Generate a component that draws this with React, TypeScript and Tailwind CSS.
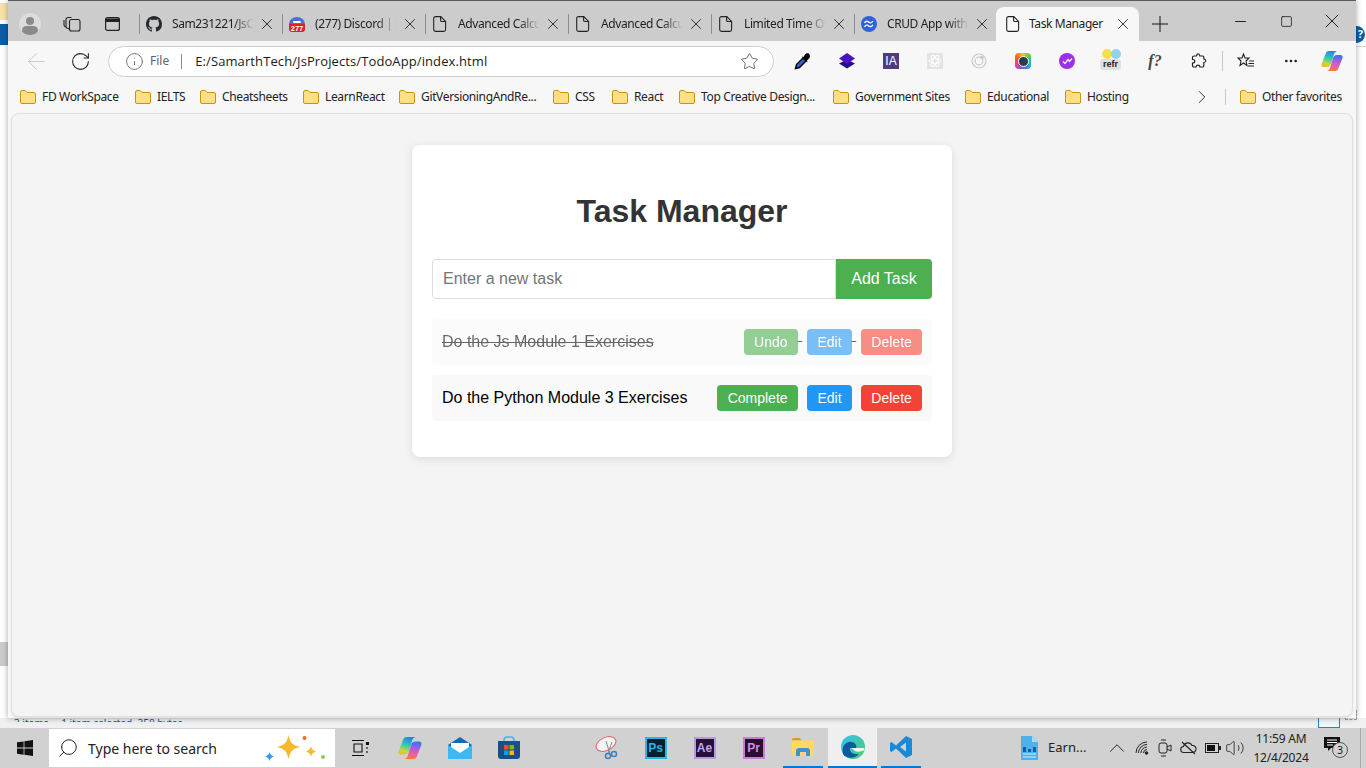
import { ReactNode } from "react";
import { ArrowLeft, ChevronRight, ChevronUp, Ellipsis, Info, Minus, Plus, RotateCw, Search, Square, Star, Volume2, X } from "lucide-react";

const FONT = "font-['Noto_Sans','Open_Sans',sans-serif]";

const bookmarks = [
    { label: "FD WorkSpace", box: "w-[115px]" },
    { label: "IELTS", box: "w-[65px]" },
    { label: "Cheatsheets", box: "w-[103px]" },
    { label: "LearnReact", box: "w-[96px]" },
    { label: "GitVersioningAndRe...", box: "w-[154px]" },
    { label: "CSS", box: "w-[59px]" },
    { label: "React", box: "w-[67px]" },
    { label: "Top Creative Design...", box: "w-[154px]" },
    { label: "Government Sites", box: "w-[132px]" },
    { label: "Educational", box: "w-[100px]" },
    { label: "Hosting", box: "w-[126px]" },
];

function Folder() {
    return (
        <svg width="16" height="14" viewBox="0 0 16 14" className="shrink-0">
            <path d="M.5 3V2A1.5 1.5 0 0 1 2 .5h3.2L7 2.5h7A1.5 1.5 0 0 1 15.5 4v8a1.5 1.5 0 0 1-1.5 1.5H2A1.5 1.5 0 0 1 .5 12Z" fill="#ffdf85" stroke="#c8930f" />
        </svg>
    );
}

function PageIcon() {
    return (
        <svg width="14" height="16" viewBox="0 0 14 16" fill="none" stroke="#222" strokeWidth="1.1" className="shrink-0">
            <path d="M2.5.6h5.3L12.6 5.4V13.6a1.8 1.8 0 0 1-1.8 1.8H2.5A1.8 1.8 0 0 1 .7 13.6V2.4A1.8 1.8 0 0 1 2.5.6Z" />
            <path d="M7.6.8v3.4a1.3 1.3 0 0 0 1.3 1.3h3.5" />
        </svg>
    );
}

function GithubIcon() {
    return (
        <svg width="16" height="16" viewBox="0 0 16 16" fill="#24292f" className="shrink-0">
            <path d="M8 0C3.58 0 0 3.58 0 8c0 3.54 2.29 6.53 5.47 7.59.4.07.55-.17.55-.38 0-.19-.01-.82-.01-1.49-2.01.37-2.53-.49-2.69-.94-.09-.23-.48-.94-.82-1.13-.28-.15-.68-.52-.01-.53.63-.01 1.08.58 1.23.82.72 1.21 1.87.87 2.33.66.07-.52.28-.87.51-1.07-1.78-.2-3.64-.89-3.64-3.95 0-.87.31-1.59.82-2.15-.08-.2-.36-1.02.08-2.12 0 0 .67-.21 2.2.82.64-.18 1.32-.27 2-.27s1.36.09 2 .27c1.53-1.04 2.2-.82 2.2-.82.44 1.1.16 1.92.08 2.12.51.56.82 1.27.82 2.15 0 3.07-1.87 3.75-3.65 3.95.29.25.54.73.54 1.48 0 1.07-.01 1.93-.01 2.2 0 .21.15.46.55.38A8.01 8.01 0 0 0 16 8c0-4.42-3.58-8-8-8Z" />
        </svg>
    );
}

function DiscordBadge() {
    return (
        <svg width="16" height="16" viewBox="0 0 16 16" className="shrink-0">
            <path d="M0 8a8 7 0 0 1 16 0Z" fill="#4a6ee0" />
            <path d="M0 8h16v5a3 3 0 0 1-3 3H3a3 3 0 0 1-3-3Z" fill="#d8232a" />
            <rect x="4" y="5" width="8" height="2" rx="1" fill="#fff" />
            <text x="8" y="14.500" textAnchor="middle" fontSize="7.500" fontWeight="700" fill="#fff" fontFamily="Liberation Sans, sans-serif">277</text>
        </svg>
    );
}

function TailwindBadge() {
    return (
        <svg width="16" height="16" viewBox="0 0 16 16" className="shrink-0">
            <circle cx="8" cy="8" r="8" fill="#2f62d9" />
            <path d="M3.500 7c1-1.600 2-2 3-1.600 1.200.4 1.700 1.500 3 1.400.8 0 1.600-.5 2.500-1.800M3.500 10.800c1-1.600 2-2 3-1.600 1.200.4 1.700 1.500 3 1.400.8 0 1.600-.5 2.500-1.800" fill="none" stroke="#fff" strokeWidth="1.300" />
        </svg>
    );
}

function Tab({ icon, title }: { icon: ReactNode; title: string }) {
    return (
        <div className="flex h-[34px] w-[143px] items-center pl-[7px]">
            <div className="h-[20px] w-px shrink-0 bg-[#8c8c8c]" />
            <div className="ml-[5px] flex w-[18px] justify-center">{icon}</div>
            <span className="ml-[9px] w-[82px] overflow-hidden whitespace-nowrap text-[12px] tracking-[-0.4px] text-[#222] [mask-image:linear-gradient(to_right,black_75%,transparent)]">{title}</span>
            <X size={18} strokeWidth={1.2} className="ml-auto -mr-px shrink-0 text-[#222]" />
        </div>
    );
}

function ExtensionIcons() {
    return (
        <div className="flex items-center">
            <div className="flex w-[44px] justify-center">
                <svg width="18" height="18" viewBox="0 0 18 18">
                    <path d="M1.500 16.500 2.500 12.500 9 6l3 3-6.500 6.500Z" fill="#2f62d9" stroke="#000" strokeWidth="1.400" />
                    <path d="M7.500 4.500 9.500 5 11 2.500c1.500-2 4-1.500 4.500 0s1 3-1 4.500l-1.500 1.500.5 2Z" fill="#000" />
                </svg>
            </div>
            <div className="flex w-[44px] justify-center">
                <svg width="16" height="16" viewBox="0 0 16 16">
                    <path d="M8 6.500 16 10.500 8 15.500 0 10.500Z" fill="#2b0a8a" />
                    <path d="M8 0 16 5.500 8 11 0 5.500Z" fill="#4a12c4" />
                </svg>
            </div>
            <div className="flex w-[44px] justify-center">
                <div className="flex size-[16px] items-center justify-center bg-[#4e3a85] font-['Liberation_Sans',sans-serif] text-[12px] leading-none text-white">IA</div>
            </div>
            <div className="flex w-[44px] justify-center">
                <div className="flex size-[16px] items-center justify-center bg-[#e4e4e4]">
                    <svg width="14" height="14" viewBox="0 0 14 14" fill="none" stroke="#fff" strokeWidth="1">
                        <ellipse cx="7" cy="7" rx="6" ry="2.400" />
                        <ellipse cx="7" cy="7" rx="6" ry="2.400" transform="rotate(60 7 7)" />
                        <ellipse cx="7" cy="7" rx="6" ry="2.400" transform="rotate(120 7 7)" />
                    </svg>
                </div>
            </div>
            <div className="flex w-[44px] justify-center">
                <svg width="16" height="16" viewBox="0 0 16 16" fill="none" stroke="#c9c9c9" strokeWidth="1.200">
                    <circle cx="8" cy="8" r="7" />
                    <circle cx="8" cy="8" r="3.800" />
                    <circle cx="11" cy="4.500" r="1.200" fill="#c9c9c9" />
                </svg>
            </div>
            <div className="flex w-[44px] justify-center">
                <div className="flex size-[16px] items-center justify-center rounded-[4px] bg-[conic-gradient(#f5c518,#3fcf5f,#12b6d4,#6d5be8,#e83a9a,#f5622a,#f5c518)]">
                    <div className="size-[11px] rounded-full border-[1.5px] border-white bg-[#2d3a4a]" />
                </div>
            </div>
            <div className="flex w-[44px] justify-center">
                <div className="flex size-[16px] items-center justify-center rounded-full bg-[#9b30e8]">
                    <svg width="11" height="8" viewBox="0 0 11 8" fill="none" stroke="#fff" strokeWidth="1.300"><path d="M1 4.500 3 6.500 6 2.500 7.500 4.500 10 1.500" /></svg>
                </div>
            </div>
            <div className="relative flex h-[24px] w-[44px] justify-center">
                <div className="flex">
                    <div className="size-[10px] rounded-full bg-[#f8e04a]" />
                    <div className="-ml-px size-[10px] rounded-full bg-[#8fd3ee]" />
                </div>
                <span className="absolute left-[11px] top-[10px] rounded-[3px] bg-[#e0e0e0] px-[3px] font-['Liberation_Sans',sans-serif] text-[9px] font-bold leading-[11px] text-[#222]">refr</span>
            </div>
            <div className="flex w-[44px] justify-center font-['Liberation_Serif',serif] text-[16px] font-bold italic text-[#444]">f?</div>
            <div className="flex w-[44px] justify-center">
                <svg width="16" height="16" viewBox="0 0 16 16" fill="none" stroke="#222" strokeWidth="1.200">
                    <path d="M6 1.500c1-1 2.500-.5 2.700.8l.1.700h3a1 1 0 0 1 1 1V6c1.500.2 2.200 1.200 1.800 2.400-.3.800-1 1.100-1.800 1.100v3a1.500 1.500 0 0 1-1.500 1.500H9c-.3-1.300-1.100-1.800-2-1.800s-1.700.5-2 1.800H3a1.500 1.500 0 0 1-1.500-1.500V10c1.500 0 2.300-.8 2.300-1.800S3 6.500 1.500 6.500V4.500a1.500 1.500 0 0 1 1.500-1.500h2.500Z" />
                </svg>
            </div>
        </div>
    );
}

function Copilot({ size }: { size: number }) {
    return (
        <svg width={size} height={size} viewBox="0 0 22 22">
            <defs>
                <linearGradient id="cpa" x1="0.6" y1="0" x2="0.3" y2="1">
                    <stop offset="0" stopColor="#1e86e8" />
                    <stop offset="0.45" stopColor="#32c8b0" />
                    <stop offset="0.8" stopColor="#c5d83a" />
                    <stop offset="1" stopColor="#f7b52b" />
                </linearGradient>
                <linearGradient id="cpb" x1="0.6" y1="0" x2="0.4" y2="1">
                    <stop offset="0" stopColor="#2a7cf0" />
                    <stop offset="0.35" stopColor="#a45be8" />
                    <stop offset="0.7" stopColor="#ee5fa5" />
                    <stop offset="1" stopColor="#f8792c" />
                </linearGradient>
            </defs>
            <path d="M8 1h8c-1.500.5-2.500 1.500-3 3l-3 10c-.6 2-2 3-4 3H2.500C.8 17 0 15.500.5 14L4.500 4C5.200 2 6.200 1 8 1Z" fill="url(#cpa)" />
            <path d="M14 21H6c1.500-.5 2.500-1.500 3-3l3-10c.6-2 2-3 4-3h3.500c1.700 0 2.500 1.500 2 3L17.500 18c-.7 2-1.700 3-3.500 3Z" fill="url(#cpb)" />
        </svg>
    );
}

function TaskButton({ color, label }: { color: string; label: string }) {
    return <button className={`ml-[5px] inline-block h-[26px] rounded-[4px] px-[10.2px] font-['Liberation_Sans',sans-serif] text-[14px] text-white ${color}`}>{label}</button>;
}

function TaskRow({ label, done }: { label: string; done?: boolean }) {
    return (
        <li className={`mb-[10px] flex h-[46px] items-center justify-between rounded-[4px] bg-[#f9f9f9] p-[10px] ${done ? "line-through opacity-60" : ""}`}>
            <span className="text-[16px] text-black">{label}</span>
            <div>
                {done ? <TaskButton color="bg-[#4caf50]" label="Undo" /> : <TaskButton color="bg-[#4caf50]" label="Complete" />}{" "}
                <TaskButton color="bg-[#2196f3]" label="Edit" />{" "}
                <TaskButton color="bg-[#f44336]" label="Delete" />
            </div>
        </li>
    );
}

function TaskIcon({ children, box = "w-[49px]" }: { children: ReactNode; box?: string }) {
    return <div className={`flex h-[40px] items-center justify-center ${box}`}>{children}</div>;
}

function AppBadge({ text, border, bg, color }: { text: string; border: string; bg: string; color: string }) {
    return <div className={`flex size-[22px] items-center justify-center border-2 font-['Liberation_Sans',sans-serif] text-[12px] font-bold ${border} ${bg} ${color}`}>{text}</div>;
}

export default function App() {
    return (
        <div className={`relative flex h-[768px] w-[1366px] flex-col overflow-hidden bg-white ${FONT}`}>
            {/* what peeks out from behind the browser window */}
            <div className="absolute left-0 top-[3px] h-[17px] w-[8px] bg-[#f6e3a4]" />
            <div className="absolute left-0 top-[24px] h-[21px] w-[8px] bg-[#0a5ea8]" />
            <div className="absolute left-0 top-[642px] h-[24px] w-[8px] bg-[#cccccc]" />
            <div className="absolute left-0 top-[718px] h-[10px] w-full bg-[#f0f0f0]" />
            <div className="absolute left-[14px] top-[718px] h-[4px] overflow-hidden whitespace-nowrap text-[10px] leading-[10px] text-[#1f4e8c]">3 items &nbsp; &nbsp; 1 item selected &nbsp;358 bytes</div>
            <div className="absolute left-[1348px] top-[26px] flex size-[17px] items-center justify-end rounded-full bg-[#0a5ea8] pr-[2px] text-[11px] font-bold text-white">?</div>
            <div className="absolute left-[1356px] top-[46px] h-px w-[10px] bg-[#d8d8d8]" />
            <div className="absolute left-[1318px] top-[716px] h-[12px] w-[22px] border border-[#2f7fb8] bg-[#eef5fb]" />
            <div className="absolute left-[1345px] top-[710px] h-[10px] w-[12px] border border-dashed border-[#9aa4b5]" />

            <div className="relative z-10 ml-[8px] mr-[10px] flex h-[718px] flex-col bg-[#f7f7f7] shadow-[0_0_6px_rgba(0,0,0,0.35)]">
                <div className="flex h-[41px] shrink-0 items-end border-t border-[#5a5a5a] bg-[#cccccc]">
                    <div className="flex h-[34px] w-[44px] items-center pl-[11px]">
                        <div className="flex size-[22px] flex-col items-center overflow-hidden rounded-full bg-[#dcdcdc] pt-[4px]">
                            <div className="size-[8px] rounded-full bg-[#8a8a8a]" />
                            <div className="mt-px h-[10px] w-[16px] rounded-full bg-[#8a8a8a]" />
                        </div>
                    </div>
                    <div className="flex h-[34px] w-[40px] items-center justify-center">
                        <svg width="18" height="16" viewBox="0 0 18 16" fill="none" stroke="#222" strokeWidth="1.100">
                            <rect x="6.500" y="3.500" width="10.500" height="11.500" rx="2" />
                            <path d="M6.500 13 3.800 12A2 2 0 0 1 3 9.500V3.500A2 2 0 0 1 5 1.500h3.500" />
                            <path d="M3 11 1.500 10A2 2 0 0 1 1 8V4" />
                        </svg>
                    </div>
                    <div className="flex h-[34px] w-[40px] items-center justify-center">
                        <svg width="15" height="14" viewBox="0 0 15 14" fill="none" stroke="#222" strokeWidth="1.200">
                            <rect x=".6" y=".6" width="13.800" height="12.800" rx="2" />
                            <path d="M1 2h13v2.500H1Z" fill="#222" />
                        </svg>
                    </div>
                    <Tab icon={<GithubIcon />} title="Sam231221/JsChallenges" />
                    <Tab icon={<DiscordBadge />} title="(277) Discord | Friends" />
                    <Tab icon={<PageIcon />} title="Advanced Calculator" />
                    <Tab icon={<PageIcon />} title="Advanced Calculator" />
                    <Tab icon={<PageIcon />} title="Limited Time Offer" />
                    <Tab icon={<TailwindBadge />} title="CRUD App with React" />
                    <div className="ml-[6px] flex h-[34px] w-[143px] items-center rounded-t-[8px] bg-[#f7f7f7] pl-[10px] pr-[7px]">
                        <PageIcon />
                        <span className="ml-[9px] whitespace-nowrap text-[12px] tracking-[-0.4px] text-[#222]">Task Manager</span>
                        <X size={18} strokeWidth={1.2} className="ml-auto text-[#222]" />
                    </div>
                    <div className="flex h-[34px] w-[42px] items-center justify-center">
                        <Plus size={26} strokeWidth={0.9} className="text-[#111]" />
                    </div>
                    <div className="ml-[36px] flex h-[34px] items-start pt-[2px]">
                        <div className="flex h-[24px] w-[46px] items-center justify-center"><Minus size={17} strokeWidth={1.3} className="text-[#111]" /></div>
                        <div className="flex h-[24px] w-[46px] items-center justify-center"><Square size={13} strokeWidth={1.4} className="text-[#111]" /></div>
                        <div className="flex h-[24px] w-[46px] items-center justify-center"><X size={24} strokeWidth={0.9} className="text-[#111]" /></div>
                    </div>
                </div>

                <div className="flex h-[40px] shrink-0 items-center">
                    <div className="flex w-[100px] items-center pl-[6px]">
                        <div className="flex w-[44px] justify-center"><ArrowLeft size={27} strokeWidth={0.8} className="text-[#c4c4c4]" /></div>
                        <div className="flex w-[44px] justify-center"><RotateCw size={21} strokeWidth={1.2} className="text-[#222]" /></div>
                    </div>
                    <div className="flex h-[31px] w-[666px] items-center rounded-full border border-[#cfcfcf] bg-white pl-[16px] pr-[14px]">
                        <Info size={19} strokeWidth={1} className="text-[#555]" />
                        <span className="ml-[6px] text-[12px] text-[#5f5f5f]">File</span>
                        <div className="ml-[12px] h-[15px] w-px bg-[#8c8c8c]" />
                        <span className="ml-[13px] mt-[2px] font-['Open_Sans',sans-serif] text-[13px] tracking-[0.1px] text-[#1a1a1a]">E:/SamarthTech/JsProjects/TodoApp/index.html</span>
                        <Star size={19} strokeWidth={0.9} className="ml-auto text-[#333]" />
                    </div>
                    <div className="ml-[7px]"><ExtensionIcons /></div>
                    <div className="ml-px h-[20px] w-px bg-[#c8c8c8]" />
                    <div className="ml-[13px] flex w-[20px] justify-center">
                        <svg width="18" height="17" viewBox="0 0 18 17" fill="none" stroke="#222" strokeWidth="1.100">
                            <path d="M6.500 1 8 5h4L9 8l1 4.500L6.500 10 3 12.500 4 8 1 5h4Z" />
                            <path d="M12 8h5M11.500 10.500H17M11 13h6" />
                        </svg>
                    </div>
                    <Ellipsis size={16} className="ml-[27px] text-[#222]" />
                    <div className="ml-[22px]"><Copilot size={22} /></div>
                </div>

                <div className="flex h-[32px] shrink-0 items-center pl-[12px]">
                    {bookmarks.map((item) => (
                        <div key={item.label} className={`flex shrink-0 items-center gap-[6px] ${item.box}`}>
                            <Folder />
                            <span className="whitespace-nowrap text-[12px] tracking-[-0.35px] text-[#222]">{item.label}</span>
                        </div>
                    ))}
                    <ChevronRight size={22} strokeWidth={1} className="text-[#222]" />
                    <div className="ml-[12px] h-[16px] w-px bg-[#c8c8c8]" />
                    <div className="ml-[14px] flex items-center gap-[6px]">
                        <Folder />
                        <span className="whitespace-nowrap text-[12px] tracking-[-0.35px] text-[#222]">Other favorites</span>
                    </div>
                </div>

                <div className="mx-[3px] mb-px flex-1 rounded-[8px] border border-[#e0e0e0] bg-[#f4f4f4] pt-[31px] font-['Liberation_Sans',sans-serif] shadow-[0_1px_2px_rgba(0,0,0,0.1)]">
                    <div className="mx-auto w-[540px] rounded-[8px] bg-white p-[20px] shadow-[0_2px_10px_rgba(0,0,0,0.1)]">
                        <h1 className="mb-[29px] mt-[28px] text-center text-[32px] font-bold leading-[37px] text-[#333]">Task Manager</h1>
                        <div className="mb-[20px] flex">
                            <input
                                type="text"
                                placeholder="Enter a new task"
                                className="h-[40px] flex-1 rounded-l-[4px] border border-[#ddd] px-[10px] text-[16px] placeholder:text-[#757575]"
                            />
                            <button className="h-[40px] w-[96px] rounded-r-[4px] bg-[#4caf50] text-[16px] text-white">Add Task</button>
                        </div>
                        <ul className="mb-[16px]">
                            <TaskRow label="Do the Js Module 1 Exercises" done />
                            <TaskRow label="Do the Python Module 3 Exercises" />
                        </ul>
                    </div>
                </div>
            </div>

            <div className="relative z-10 mt-[10px] flex h-[40px] shrink-0 items-center bg-[#d1d1d1]">
                <TaskIcon box="w-[49px]">
                    <svg width="16" height="16" viewBox="0 0 16 16" fill="#111"><path d="M0 2.300 6.600 1.400v6.200H0ZM7.400 1.300 16 0v7.600H7.400ZM0 8.400h6.600v6.300L0 13.700ZM7.400 8.400H16V16l-8.600-1.300Z" /></svg>
                </TaskIcon>
                <div className="flex h-[38px] w-[286px] items-center bg-white pl-[8px] pr-[7px]">
                    <Search size={22} strokeWidth={1} className="scale-x-[-1] text-[#111]" />
                    <span className="ml-[9px] text-[14px] text-[#222]">Type here to search</span>
                    <svg width="66" height="34" viewBox="0 0 66 34" className="ml-auto">
                        <path d="M26.500 4c1.500 7.500 4 10.500 11.500 12-7.500 1.500-10 4.500-11.500 12-1.500-7.500-4-10.500-11.500-12 7.500-1.500 10-4.500 11.500-12Z" fill="#f7b92b" />
                        <path d="M49 15c.7 3 1.700 4.300 5 5.500-3.300 1.200-4.300 2.500-5 5.500-.7-3-1.700-4.300-5-5.500 3.300-1.200 4.300-2.500 5-5.500Z" fill="#f7b92b" />
                        <path d="M7.500 21c.5 2.500 1.500 3.500 4.500 4.500-3 1-4 2-4.500 4.500-.5-2.500-1.500-3.500-4.500-4.500 3-1 4-2 4.500-4.500Z" fill="#2a9df4" />
                        <circle cx="42.500" cy="7" r="2" fill="#ef6c2f" />
                        <circle cx="61" cy="26" r="2" fill="#8ccf4d" />
                    </svg>
                </div>
                <TaskIcon box="w-[50px]">
                    <svg width="18" height="18" viewBox="0 0 18 18" fill="none" stroke="#111" strokeWidth="1.100">
                        <path d="M1 1.500h12M1 16.500h12M3 5h8v8H3Z" />
                        <path d="M15.500 3.500h2v2h-2Z" fill="#111" />
                        <path d="M16 8v2M16 12v2" />
                    </svg>
                </TaskIcon>
                <TaskIcon box="w-[50px]"><Copilot size={24} /></TaskIcon>
                <TaskIcon box="w-[50px]">
                    <svg width="24" height="24" viewBox="0 0 24 24">
                        <path d="M0 9 12 1l12 8v14H0Z" fill="#0f6cbd" />
                        <path d="M3 7h18v9l-9 4-9-4Z" fill="#fff" />
                        <path d="M0 9l12 8 12-8v14H0Z" fill="#3bb8f5" />
                    </svg>
                </TaskIcon>
                <TaskIcon box="w-[48px]">
                    <svg width="24" height="24" viewBox="0 0 24 24">
                        <path d="M7 6V4a3 3 0 0 1 3-3h4a3 3 0 0 1 3 3v2" fill="none" stroke="#3bb8f5" strokeWidth="1.600" />
                        <path d="M1 5h22v15a3 3 0 0 1-3 3H4a3 3 0 0 1-3-3Z" fill="#1a4f86" />
                        <rect x="7" y="9" width="4.500" height="4.500" fill="#f25022" />
                        <rect x="12.500" y="9" width="4.500" height="4.500" fill="#7fba00" />
                        <rect x="7" y="14.500" width="4.500" height="4.500" fill="#00a4ef" />
                        <rect x="12.500" y="14.500" width="4.500" height="4.500" fill="#ffb900" />
                    </svg>
                </TaskIcon>
                <div className="w-[49px]" />
                <TaskIcon box="w-[49px]">
                    <svg width="24" height="24" viewBox="0 0 24 24">
                        <ellipse cx="11" cy="8" rx="10.500" ry="6.500" transform="rotate(-25 11 8)" fill="#f4f4f4" stroke="#e2615f" strokeWidth="1" />
                        <path d="M11 5l4 13M17 6l-4 11" stroke="#888" strokeWidth="1" />
                        <circle cx="13" cy="20" r="2.500" fill="none" stroke="#3d82c4" strokeWidth="1.600" />
                        <circle cx="19" cy="18" r="2.500" fill="none" stroke="#3d82c4" strokeWidth="1.600" />
                    </svg>
                </TaskIcon>
                <TaskIcon box="w-[49px]"><AppBadge text="Ps" border="border-[#2fb4e8]" bg="bg-[#04202e]" color="text-[#2fb4e8]" /></TaskIcon>
                <TaskIcon box="w-[49px]"><AppBadge text="Ae" border="border-[#b79ad8]" bg="bg-[#241038]" color="text-[#c3a5ea]" /></TaskIcon>
                <TaskIcon box="w-[49px]"><AppBadge text="Pr" border="border-[#c77dd8]" bg="bg-[#2a0e30]" color="text-[#d58ee6]" /></TaskIcon>
                <div className="ml-[5px] flex h-[40px] w-[40px] items-center justify-center border-b-2 border-[#0078d4]">
                    <svg width="22" height="18" viewBox="0 0 22 18">
                        <path d="M0 1.500A1.500 1.500 0 0 1 1.500 0h6L10 2.500H0Z" fill="#d89b1a" />
                        <path d="M0 2.500h22V17a1 1 0 0 1-1 1H1a1 1 0 0 1-1-1Z" fill="#ffd867" />
                        <path d="M4 18v-5a3 3 0 0 1 3-3h8a3 3 0 0 1 3 3v5h-4v-4H8v4Z" fill="#3d93d4" />
                    </svg>
                </div>
                <div className="ml-[5px] flex h-[40px] w-[49px] items-center justify-center border-b-2 border-[#0078d4] bg-[#efefef]">
                    <svg width="24" height="24" viewBox="0 0 24 24">
                        <defs>
                            <linearGradient id="edge" x1="0" y1="0" x2="1" y2="1"><stop offset="0" stopColor="#35c1f1" /><stop offset="1" stopColor="#49cf6d" /></linearGradient>
                        </defs>
                        <circle cx="12" cy="12" r="12" fill="url(#edge)" />
                        <path d="M2 19C0 10 6 6 11 7c4 1 5 4 4 6H9c-1 4 4 7 9 6-4 5-13 5-16 0Z" fill="#0c59a4" />
                        <path d="M10 13h13c1 1 0 3-2 3-3 1-7 1-8-1Z" fill="#f4f4f4" />
                    </svg>
                </div>
                <div className="ml-[4px] flex h-[40px] w-[40px] items-center justify-center border-b-2 border-[#0078d4]">
                    <svg width="24" height="24" viewBox="0 0 24 24">
                        <path d="M17 1 23 4v16l-6 3L7 13.500l-4.500 3.500L1 16v-8l1.500-1L7 10.500Zm0 6.500L11 12l6 4.500Z" fill="#1a8ad8" />
                    </svg>
                </div>
                <div className="ml-[97px] flex h-[40px] w-[91px] items-center pl-[2px]">
                    <svg width="18" height="24" viewBox="0 0 18 24">
                        <path d="M1 0h11l6 6v18H1Z" fill="#4db2ec" />
                        <path d="M12 0l6 6h-6Z" fill="#a9dcf8" />
                        <path d="M3 11h3v5H3ZM8 13h3v3H8ZM13 11h3v5h-3Z" fill="#0f5fa8" />
                        <path d="M3 18h13M3 21h13" stroke="#d8effb" />
                    </svg>
                    <span className="ml-[10px] text-[13px] text-[#222]">Earn...</span>
                </div>
                <div className="-ml-[5px] flex items-center text-[#222]">
                    <ChevronUp size={26} strokeWidth={0.9} />
                    <svg width="14" height="14" viewBox="0 0 14 14" fill="none" stroke="#222" strokeWidth="1" className="ml-[5px]">
                        <path d="M1 12a11 11 0 0 1 11-11M3.500 12A8.500 8.500 0 0 1 12 3.500M6 12a6 6 0 0 1 6-6M8.500 12A3.500 3.500 0 0 1 12 8.500" />
                        <circle cx="11.500" cy="12" r="1.300" fill="#222" />
                    </svg>
                    <svg width="14" height="18" viewBox="0 0 14 18" fill="none" stroke="#222" strokeWidth="1" className="ml-[9px]">
                        <rect x="1" y="4" width="8" height="10" rx="2" />
                        <path d="M9 8l4-2v6l-4-2M3 1h5M3 17h5" />
                    </svg>
                    <svg width="17" height="14" viewBox="0 0 17 14" fill="none" stroke="#222" strokeWidth="1.100" className="ml-[8px]">
                        <path d="M4 11.500a3 3 0 0 1-.5-6 4.500 4.500 0 0 1 8.500-1 3.500 3.500 0 0 1 1 7ZM2 1l13 12" />
                    </svg>
                    <svg width="16" height="10" viewBox="0 0 16 10" className="ml-[8px]">
                        <rect x=".5" y=".5" width="13" height="9" fill="none" stroke="#222" />
                        <rect x="2" y="2" width="8" height="6" fill="#111" />
                        <rect x="14" y="3" width="2" height="4" fill="#222" />
                    </svg>
                    <Volume2 size={20} strokeWidth={1} className="ml-[4px]" />
                </div>
                <div className="ml-[6px] flex w-[60px] flex-col items-center text-[12px] leading-[19px] tracking-[-0.2px] text-[#222]">
                    <span>11:59 AM</span>
                    <span>12/4/2024</span>
                </div>
                <div className="relative ml-[13px] h-[22px] w-[24px]">
                    <svg width="16" height="16" viewBox="0 0 16 16" fill="#111"><path d="M0 0h16v11H7l-3 3v-3H0Z" /><path d="M3 3h10M3 5.500h10M3 8h6" stroke="#fff" /></svg>
                    <div className="absolute left-[8px] top-[5px] flex size-[16px] items-center justify-center rounded-full border border-[#555] bg-[#d1d1d1] text-[10px] leading-none text-[#111]">3</div>
                </div>
                <div className="ml-[12px] h-full w-px bg-[#a8a8a8]" />
            </div>
        </div>
    );
}
